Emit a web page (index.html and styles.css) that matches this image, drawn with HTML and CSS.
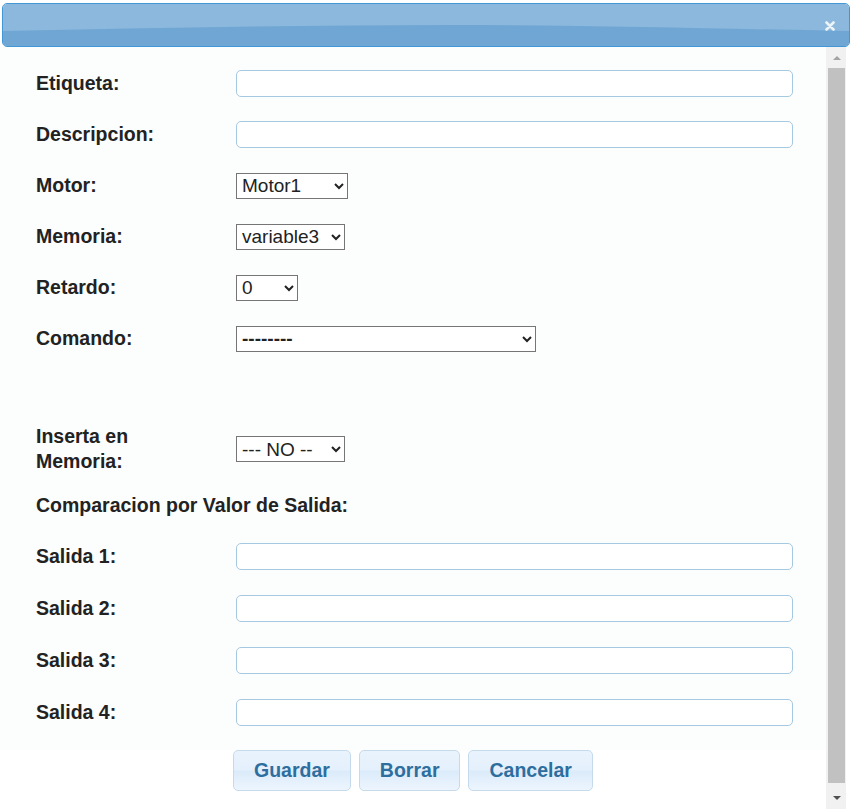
FILE: index.html
```html
<!DOCTYPE html>
<html lang="es">
<head>
    <meta charset="UTF-8">
    <title>Comando</title>
    <link rel="stylesheet" href="styles.css">
</head>
<body>

<div class="dialog">
    <!-- Title bar -->
    <div class="titlebar">
        <svg class="titlebar-bg" viewBox="0 0 846 42" preserveAspectRatio="none">
            <rect width="846" height="42" fill="#8bb8dc"/>
            <path d="M0 27 C 150 24, 300 21, 450 21 S 720 25, 846 27 L846 42 L0 42 Z" fill="#6fa6d3"/>
        </svg>
        <button class="close-btn" title="Cerrar">
            <svg width="10" height="10" viewBox="0 0 10 10">
                <path d="M1.5 1.5 L8.5 8.5 M8.5 1.5 L1.5 8.5" stroke="#fff" stroke-width="2.6" stroke-linecap="round"/>
            </svg>
        </button>
    </div>

    <div class="dialog-body">
        <div class="content">
            <!-- Form -->
            <form class="form">
                <div class="row">
                    <label>Etiqueta:</label>
                    <input type="text" class="text-field">
                </div>
                <div class="row">
                    <label>Descripcion:</label>
                    <input type="text" class="text-field">
                </div>
                <div class="row">
                    <label>Motor:</label>
                    <select class="sel sel-motor"><option>Motor1</option></select>
                </div>
                <div class="row">
                    <label>Memoria:</label>
                    <select class="sel sel-memoria"><option>variable3</option></select>
                </div>
                <div class="row">
                    <label>Retardo:</label>
                    <select class="sel sel-retardo"><option>0</option></select>
                </div>
                <div class="row">
                    <label>Comando:</label>
                    <select class="sel sel-comando"><option>--------</option></select>
                </div>
                <div class="row spacer"></div>
                <div class="row tall">
                    <label>Inserta en<br>Memoria:</label>
                    <select class="sel sel-inserta"><option>--- NO --</option></select>
                </div>
                <div class="row heading">
                    <label class="wide">Comparacion por Valor de Salida:</label>
                </div>
                <div class="row out">
                    <label>Salida 1:</label>
                    <input type="text" class="text-field">
                </div>
                <div class="row out">
                    <label>Salida 2:</label>
                    <input type="text" class="text-field">
                </div>
                <div class="row out">
                    <label>Salida 3:</label>
                    <input type="text" class="text-field">
                </div>
                <div class="row out">
                    <label>Salida 4:</label>
                    <input type="text" class="text-field">
                </div>
            </form>

            <!-- Buttons -->
            <div class="actions">
                <button class="ui-button">Guardar</button>
                <button class="ui-button">Borrar</button>
                <button class="ui-button">Cancelar</button>
            </div>
        </div>

        <!-- Scrollbar -->
        <div class="scrollbar">
            <div class="sb-arrow sb-up"></div>
            <div class="sb-thumb"></div>
            <div class="sb-arrow sb-down"></div>
        </div>
    </div>
</div>

</body>
</html>
```

FILE: styles.css
```css
body {
    margin: 0;
    background-color: #fff;
    font-family: "Liberation Sans", Arial, sans-serif;
    color: #222;
}

.dialog {
    height: 809px;
    display: flex;
    flex-direction: column;
    overflow: hidden;
}

/* Title bar, jQuery UI redmond look */
.titlebar {
    position: relative;
    margin: 3px 2px 0 2px;
    height: 44px;
    box-sizing: border-box;
    border: 1px solid #4297d7;
    border-radius: 5px;
    overflow: hidden;
    display: flex;
    justify-content: flex-end;
    align-items: center;
}

.titlebar-bg {
    position: absolute;
    top: 0;
    left: 0;
    width: 100%;
    height: 100%;
}

.close-btn {
    position: relative;
    background: none;
    border: none;
    padding: 0;
    margin-right: 13px;
    margin-top: 1px;
    width: 12px;
    height: 12px;
    opacity: 0.85;
    display: flex;
    align-items: center;
    justify-content: center;
}

.dialog-body {
    flex: 1;
    display: flex;
    min-height: 0;
}

.content {
    width: 826px;
}

.form {
    background-color: #fcfdfd;
    margin: 0;
    padding: 11px 0 12px 36px;
}

.row {
    display: flex;
    align-items: center;
    height: 51px;
}

.row label {
    width: 200px;
    flex-shrink: 0;
    font-size: 19.5px;
    font-weight: bold;
    line-height: 25px;
    color: #222;
}

.row label.wide {
    width: auto;
}

.spacer {
    height: 53px;
}

.tall {
    height: 64px;
}

.heading {
    height: 49px;
}

.out {
    height: 52px;
}

.text-field {
    width: 557px;
    height: 27px;
    box-sizing: border-box;
    border: 1px solid #a6c9e2;
    border-radius: 5px;
    background-color: #fff;
    padding: 2px 6px;
    font-size: 16px;
    font-family: "Liberation Sans", Arial, sans-serif;
}

.sel {
    height: 26px;
    box-sizing: border-box;
    font-family: "Liberation Sans", Arial, sans-serif;
    font-size: 19px;
    color: #222;
    background-color: #fff;
    border: 1px solid #767676;
    border-radius: 0;
    padding: 0 1px;
}

.sel-motor { width: 112px; }
.sel-memoria { width: 109px; }
.sel-retardo { width: 62px; }
.sel-comando { width: 300px; font-weight: bold; }
.sel-inserta { width: 109px; }

.actions {
    display: flex;
    gap: 8px;
    padding-left: 233px;
}

.ui-button {
    height: 41px;
    box-sizing: border-box;
    padding: 0 20px;
    border: 1px solid #c5dbec;
    border-radius: 5px;
    background: linear-gradient(#e9f3fd 0%, #e4f0fc 48%, #dbebfa 52%, #edf5fe 100%);
    color: #2e6e9e;
    font-family: "Liberation Sans", Arial, sans-serif;
    font-size: 19.5px;
    font-weight: bold;
    cursor: pointer;
}

/* Fake scrollbar */
.scrollbar {
    width: 20px;
    background-color: #f1f1f1;
    display: flex;
    flex-direction: column;
    align-items: center;
    padding-left: 1px;
    box-sizing: border-box;
}

.sb-arrow {
    width: 17px;
    display: flex;
    justify-content: center;
    align-items: center;
}

.sb-up {
    height: 21px;
}

.sb-down {
    height: 26px;
    padding-top: 3px;
    box-sizing: border-box;
}

.sb-up::after {
    content: "";
    border-left: 4px solid transparent;
    border-right: 4px solid transparent;
    border-bottom: 4px solid #a3a3a3;
}

.sb-down::after {
    content: "";
    border-left: 4px solid transparent;
    border-right: 4px solid transparent;
    border-top: 4px solid #505050;
}

.sb-thumb {
    flex: 1;
    width: 17px;
    background-color: #c1c1c1;
}
```
